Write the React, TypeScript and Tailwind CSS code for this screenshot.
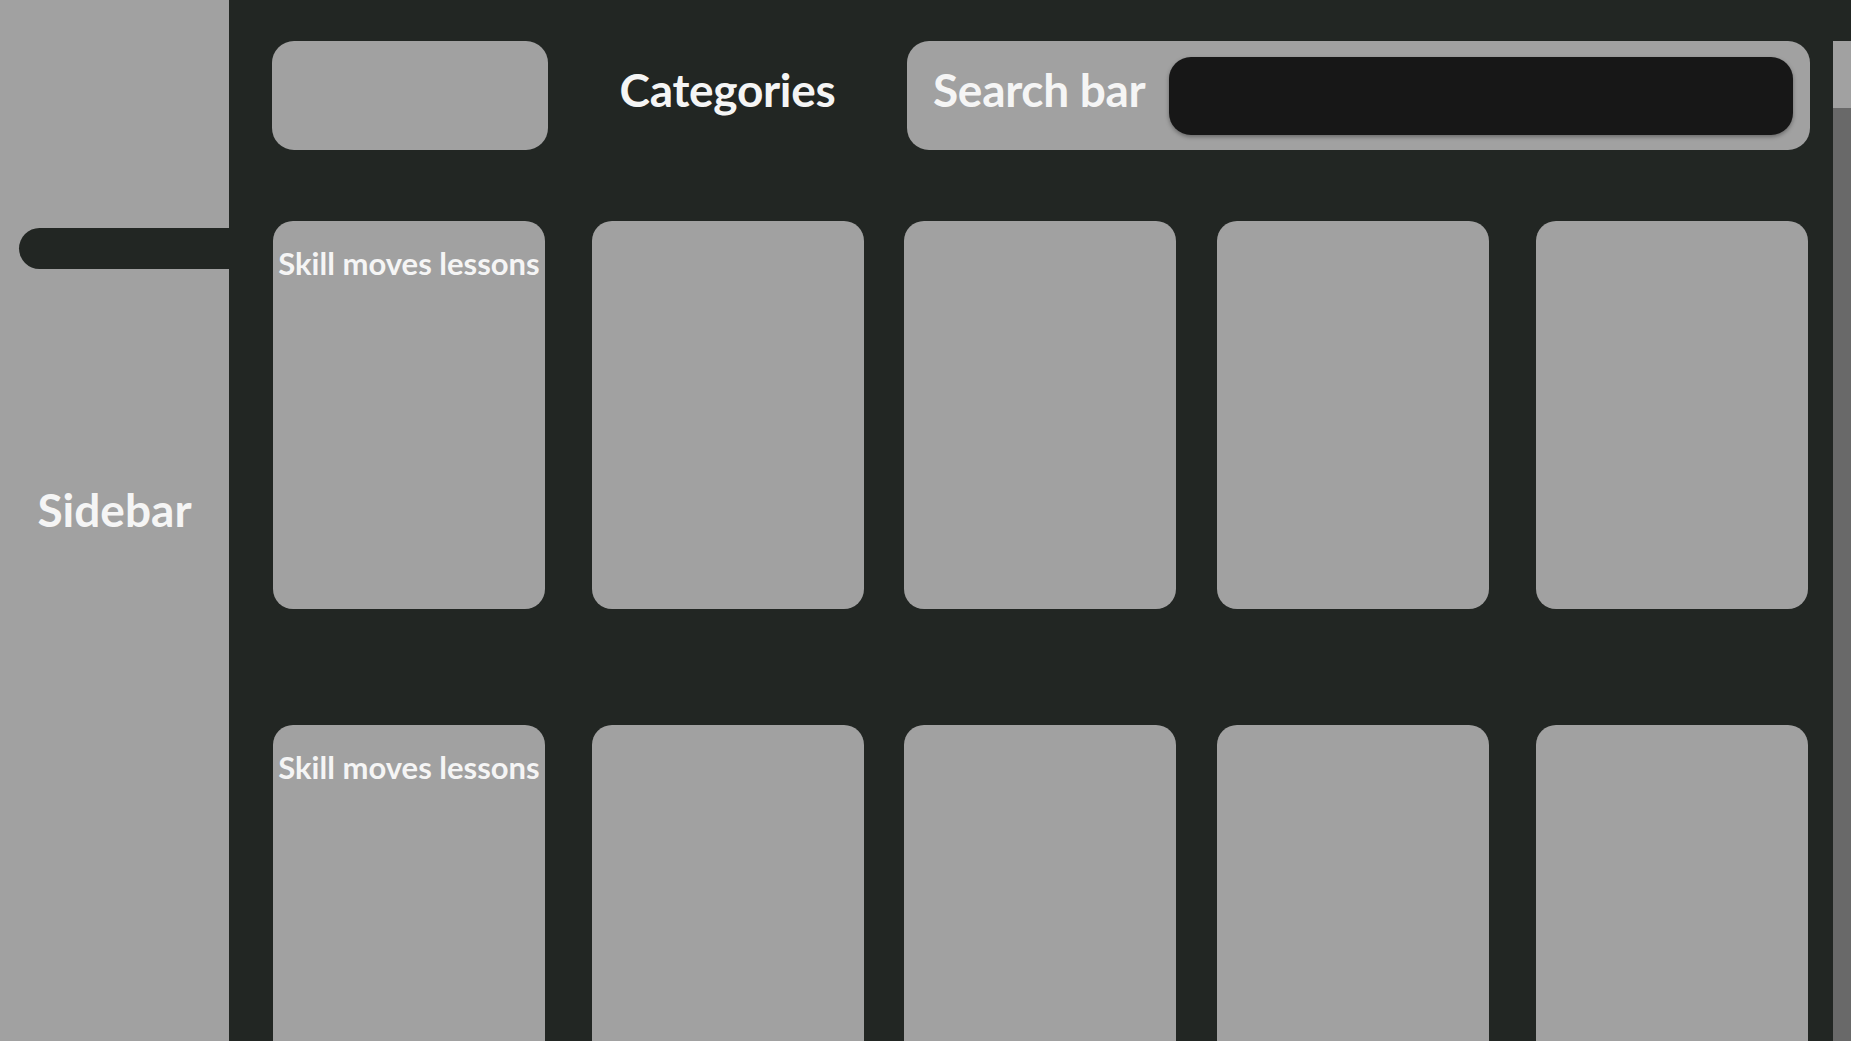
const rows = [0, 1];
const gaps = ['', 'ml-[47px]', 'ml-[40px]', 'ml-[41px]', 'ml-[47px]'];

function Card({ first, gap }: { first: boolean; gap: string }) {
    return (
        <div className={`${gap} flex h-[388px] w-[272px] shrink-0 justify-center rounded-[20px] bg-[#a1a1a1] pt-[27px]`}>
            {first && (
                <p className="whitespace-nowrap text-[31px] font-bold leading-none text-[#f5f5f5]">
                    Skill moves lessons
                </p>
            )}
        </div>
    );
}

export default function App() {
    return (
        <div className="flex h-screen w-full overflow-hidden bg-[#222623] font-['Lato',sans-serif]">
            <aside className="flex w-[229px] shrink-0 flex-col bg-[#a1a1a1] pt-[228px]">
                <div className="ml-[19px] h-[41px] rounded-l-full bg-[#222623]" />
                <h2 className="mt-[218px] text-center text-[46px] font-bold leading-none text-[#f5f5f5]">
                    Sidebar
                </h2>
            </aside>

            <main className="flex min-w-0 flex-1">
                <div className="min-w-0 flex-1 overflow-hidden pl-[43px] pr-[23px] pt-[41px]">
                    <header className="flex h-[109px] w-[1538px] items-stretch">
                        <div className="w-[276px] shrink-0 rounded-[22px] bg-[#a1a1a1]" />
                        <div className="flex w-[359px] shrink-0 items-center justify-center pb-[12px]">
                            <h1 className="text-[46px] font-bold leading-none tracking-[-0.3px] text-[#f5f5f5]">
                                Categories
                            </h1>
                        </div>
                        <div className="flex flex-1 items-center gap-[24px] rounded-[22px] bg-[#a1a1a1] pl-[26px] pr-[17px]">
                            <span className="whitespace-nowrap pb-[12px] text-[46px] font-bold leading-none tracking-[-0.3px] text-[#f5f5f5]">
                                Search bar
                            </span>
                            <input
                                className="h-[78px] min-w-0 flex-1 rounded-[22px] bg-[#171717] shadow-[0_2px_4px_rgba(0,0,0,0.35)] outline-none"
                                aria-label="search"
                            />
                        </div>
                    </header>

                    <div className="ml-[1px] mt-[71px] flex flex-col gap-[116px]">
                        {rows.map((r) => (
                            <div key={r} className="flex">
                                {gaps.map((g, i) => (
                                    <Card key={i} first={i === 0} gap={g} />
                                ))}
                            </div>
                        ))}
                    </div>
                </div>

                {/* scrollbar */}
                <div className="mt-[41px] flex w-[18px] shrink-0 flex-col bg-[#696969]">
                    <div className="h-[67px] bg-[#a1a1a1]" />
                </div>
            </main>
        </div>
    );
}
